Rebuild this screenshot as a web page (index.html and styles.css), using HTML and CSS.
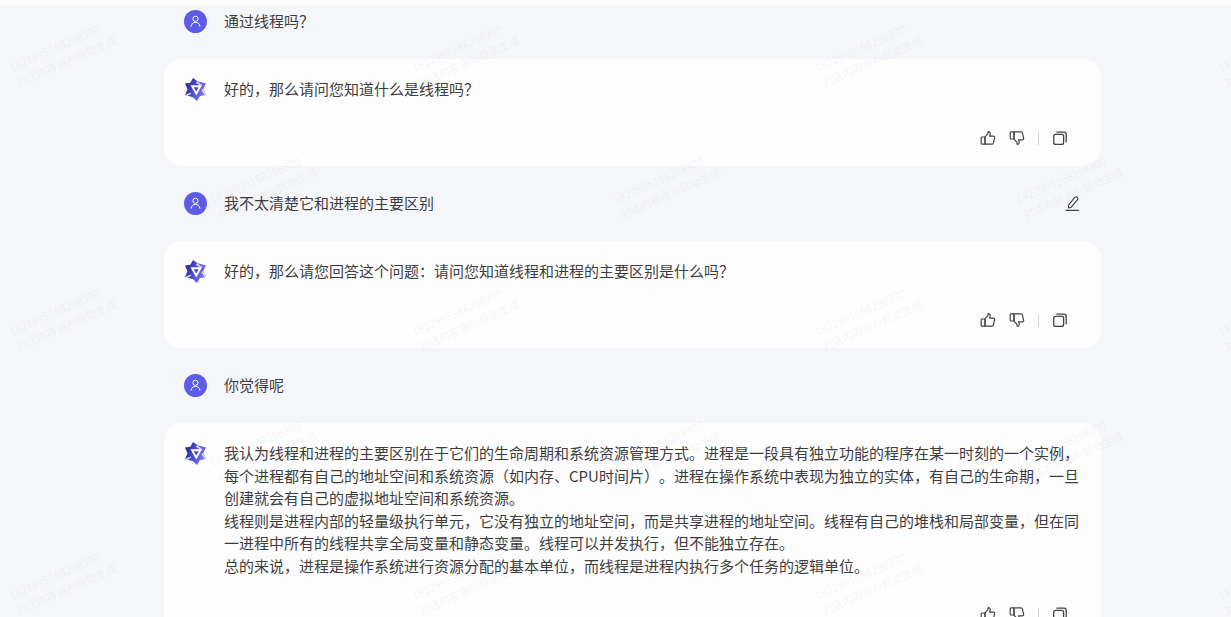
FILE: index.html
```html
<!DOCTYPE html>
<html lang="zh-CN">
<head>
  <meta charset="UTF-8">
  <title>对话</title>
  <link rel="stylesheet" href="styles.css">
</head>
<body>
  <svg class="defs" width="0" height="0">
    <defs>
      <linearGradient id="logoFill" x1="0" y1="0.3" x2="1" y2="0.7">
        <stop offset="0" stop-color="#2b2794"/>
        <stop offset="0.5" stop-color="#5451d8"/>
        <stop offset="1" stop-color="#8482f4"/>
      </linearGradient>
      <symbol id="avatar" viewBox="0 0 23 23">
        <circle cx="11.5" cy="11.5" r="11.5" fill="#5e5ce6"/>
        <circle cx="11.5" cy="8.800" r="2.600" fill="none" stroke="#fff" stroke-width="1"/>
        <path d="M7 16.300c.5-2.500 2.300-4 4.500-4s4 1.500 4.500 4" fill="none" stroke="#fff" stroke-width="1" stroke-linecap="round"/>
      </symbol>
      <symbol id="logo" viewBox="0 0 23 23">
        <path d="M9 0l4.500 3.200L22 5.500l-2.800 5.700L22.500 17l-6.500 1-3 5-4-3.800L1 17l2.500-5.800L1 5.500l5.300-.8z" fill="url(#logoFill)"/>
        <path d="M6.500 7.200h11.500l-5.800 10.300z" fill="#fff"/>
        <path d="M9.800 9.300h4.800l-2.400 4.300z" fill="#4643c4"/>
        <path d="M13.500 3.200l4.800 4-1.400.8-5.200-3.200zM1 17l5.500-2.500.8 1.200-4.300 2.300zM18.500 11l4 6-1.500.2-3.500-4.800z" fill="#fff" fill-opacity=".75"/>
      </symbol>
      <symbol id="thumb" viewBox="0 0 16 16">
        <path d="M5 6.800l2.700-2.900c.3-.4.400-.9.400-1.500V1.700c.9-.3 2 .300 2.100 1.500.1.900-.2 1.900-.6 2.900h3.700c.9 0 1.500.8 1.300 1.600l-1.200 5.400c-.2.700-.7 1.100-1.400 1.100H5z" fill="none" stroke="currentColor" stroke-width="1.200" stroke-linejoin="round"/>
        <path d="M5 7H2.100c-.5 0-.9.400-.9.900v5.400c0 .5.400.9.900.9H5z" fill="none" stroke="currentColor" stroke-width="1.200" stroke-linejoin="round"/>
      </symbol>
      <symbol id="copy" viewBox="0 0 16 16">
        <rect x="1.700" y="4.400" width="9.900" height="10" rx="2" fill="none" stroke="currentColor" stroke-width="1.300"/>
        <path d="M4.800 2.100h7.400c1.200 0 2 .8 2 2v7.700" fill="none" stroke="currentColor" stroke-width="1.300" stroke-linecap="round"/>
      </symbol>
      <symbol id="edit" viewBox="0 0 16 16">
        <path d="M3.500 9.200l6.500-8c.4-.5 1-.6 1.500-.2l1 .8c.5.400.6 1 .2 1.500l-6.400 7.900-2.800.8z" fill="none" stroke="currentColor" stroke-width="1.100" stroke-linejoin="round"/>
        <path d="M1 14.300h12.400" fill="none" stroke="currentColor" stroke-width="1.200" stroke-linecap="round"/>
      </symbol>
    </defs>
  </svg>

  <div class="topbar"></div>

  <div class="chat">
    <div class="user-msg">
      <svg class="avatar"><use href="#avatar"/></svg>
      <div class="text">通过线程吗？</div>
    </div>

    <div class="answer">
      <div class="answer-body">
        <svg class="avatar"><use href="#logo"/></svg>
        <div class="text">好的，那么请问您知道什么是线程吗？</div>
      </div>
      <div class="actions">
        <svg class="icon"><use href="#thumb"/></svg>
        <svg class="icon flip"><use href="#thumb"/></svg>
        <span class="divider"></span>
        <svg class="icon"><use href="#copy"/></svg>
      </div>
    </div>

    <div class="user-msg">
      <svg class="avatar"><use href="#avatar"/></svg>
      <div class="text">我不太清楚它和进程的主要区别</div>
      <svg class="icon edit"><use href="#edit"/></svg>
    </div>

    <div class="answer">
      <div class="answer-body">
        <svg class="avatar"><use href="#logo"/></svg>
        <div class="text">好的，那么请您回答这个问题：请问您知道线程和进程的主要区别是什么吗？</div>
      </div>
      <div class="actions">
        <svg class="icon"><use href="#thumb"/></svg>
        <svg class="icon flip"><use href="#thumb"/></svg>
        <span class="divider"></span>
        <svg class="icon"><use href="#copy"/></svg>
      </div>
    </div>

    <div class="user-msg">
      <svg class="avatar"><use href="#avatar"/></svg>
      <div class="text">你觉得呢</div>
    </div>

    <div class="answer">
      <div class="answer-body">
        <svg class="avatar"><use href="#logo"/></svg>
        <div class="text">
          <p>我认为线程和进程的主要区别在于它们的生命周期和系统资源管理方式。进程是一段具有独立功能的程序在某一时刻的一个实例，每个进程都有自己的地址空间和系统资源（如内存、CPU时间片）。进程在操作系统中表现为独立的实体，有自己的生命期，一旦创建就会有自己的虚拟地址空间和系统资源。</p>
          <p>线程则是进程内部的轻量级执行单元，它没有独立的地址空间，而是共享进程的地址空间。线程有自己的堆栈和局部变量，但在同一进程中所有的线程共享全局变量和静态变量。线程可以并发执行，但不能独立存在。</p>
          <p>总的来说，进程是操作系统进行资源分配的基本单位，而线程是进程内执行多个任务的逻辑单位。</p>
        </div>
      </div>
      <div class="actions">
        <svg class="icon"><use href="#thumb"/></svg>
        <svg class="icon flip"><use href="#thumb"/></svg>
        <span class="divider"></span>
        <svg class="icon"><use href="#copy"/></svg>
      </div>
    </div>
  </div>

  <!-- watermark lies over everything -->
  <div class="watermark">
    <div class="wm-row">
      <div class="wm-tile"><div class="wm-text">1822995168298300<br>对话内容由AI自动生成</div></div>
      <div class="wm-tile"><div class="wm-text">1822995168298300<br>对话内容由AI自动生成</div></div>
      <div class="wm-tile"><div class="wm-text">1822995168298300<br>对话内容由AI自动生成</div></div>
      <div class="wm-tile"><div class="wm-text">1822995168298300<br>对话内容由AI自动生成</div></div>
    </div>
    <div class="wm-row alt">
      <div class="wm-tile"><div class="wm-text">1822995168298300<br>对话内容由AI自动生成</div></div>
      <div class="wm-tile"><div class="wm-text">1822995168298300<br>对话内容由AI自动生成</div></div>
      <div class="wm-tile"><div class="wm-text">1822995168298300<br>对话内容由AI自动生成</div></div>
    </div>
    <div class="wm-row">
      <div class="wm-tile"><div class="wm-text">1822995168298300<br>对话内容由AI自动生成</div></div>
      <div class="wm-tile"><div class="wm-text">1822995168298300<br>对话内容由AI自动生成</div></div>
      <div class="wm-tile"><div class="wm-text">1822995168298300<br>对话内容由AI自动生成</div></div>
      <div class="wm-tile"><div class="wm-text">1822995168298300<br>对话内容由AI自动生成</div></div>
    </div>
    <div class="wm-row alt">
      <div class="wm-tile"><div class="wm-text">1822995168298300<br>对话内容由AI自动生成</div></div>
      <div class="wm-tile"><div class="wm-text">1822995168298300<br>对话内容由AI自动生成</div></div>
      <div class="wm-tile"><div class="wm-text">1822995168298300<br>对话内容由AI自动生成</div></div>
    </div>
    <div class="wm-row">
      <div class="wm-tile"><div class="wm-text">1822995168298300<br>对话内容由AI自动生成</div></div>
      <div class="wm-tile"><div class="wm-text">1822995168298300<br>对话内容由AI自动生成</div></div>
      <div class="wm-tile"><div class="wm-text">1822995168298300<br>对话内容由AI自动生成</div></div>
      <div class="wm-tile"><div class="wm-text">1822995168298300<br>对话内容由AI自动生成</div></div>
    </div>
  </div>
</body>
</html>
```

FILE: styles.css
```css
body{
  margin: 0;
  height: 617px;
  overflow: hidden;
  background: #f5f6fa;
  font-family: "Noto Sans CJK SC", sans-serif;
  font-size: 15px;
  line-height: 22.5px;
  color: #3d3d3d;
  position: relative;
  text-spacing-trim: space-all;
}
.defs{
  position: absolute;
}
.topbar{
  height: 5px;
  background: #fdfdfe;
}

.chat{
  width: 937px;
  margin-left: 164px;
  padding-top: 5px;
  display: flex;
  flex-direction: column;
  gap: 26px;
}
.user-msg{
  display: flex;
  align-items: center;
  gap: 17px;
  height: 23px;
  padding: 0 20px;
}
.avatar{
  width: 23px;
  height: 23px;
  flex: none;
}
.text{
  flex: 1;
}
.text p{
  margin: 0;
}

.answer{
  background: #fdfdfe;
  border-radius: 18px;
  padding: 20px;
}
.answer-body{
  display: flex;
  gap: 17px;
}
.answer-body .text{
  margin-top: -1px;
  margin-bottom: 1px;
}
.answer-body .avatar{
  margin-top: -1px;
  margin-bottom: 1px;
}
.actions{
  display: flex;
  align-items: center;
  justify-content: flex-end;
  margin-top: 28px;
  margin-right: 13px;
}
.icon{
  width: 16px;
  height: 16px;
  flex: none;
  color: #444;
}
.icon + .icon{
  margin-left: 13px;
}
.flip{
  transform: rotate(180deg) scaleX(-1);
}
.divider{
  width: 1px;
  height: 13px;
  margin: 0 13px;
  background: #d5d7e0;
}

.watermark{
  position: absolute;
  top: 0;
  left: 0;
  width: 1231px;
  height: 617px;
  box-sizing: border-box;
  padding-top: 60px;
  overflow: hidden;
  pointer-events: none;
}
.wm-row{
  display: flex;
  height: 132px;
  padding-left: 6px;
}
.wm-row.alt{
  padding-left: 207px;
}
.wm-tile{
  width: 403px;
  flex: none;
}
.wm-text{
  width: 120px;
  font-size: 11px;
  line-height: 16.5px;
  white-space: nowrap;
  color: rgba(70, 80, 120, 0.07);
  transform: rotate(-24deg);
  transform-origin: left top;
}
```
